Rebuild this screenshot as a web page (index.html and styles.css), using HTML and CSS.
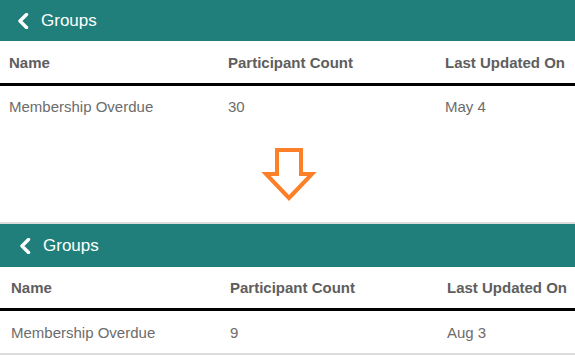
FILE: index.html
```html
<!DOCTYPE html>
<html lang="en">
<head>
    <meta charset="UTF-8">
    <title>Groups</title>
    <link rel="stylesheet" href="styles.css">
</head>
<body>
    <div class="panel panel-before">
        <div class="topbar">
            <svg class="back" width="12" height="16" viewBox="0 0 12 16"><path d="M9.5 1.5 L3 8 L9.5 14.5" fill="none" stroke="#fff" stroke-width="3.4" stroke-linecap="round" stroke-linejoin="round"/></svg>
            <span class="title">Groups</span>
        </div>
        <div class="row head">
            <div>Name</div><div>Participant Count</div><div>Last Updated On</div>
        </div>
        <div class="row data">
            <div>Membership Overdue</div><div>30</div><div>May 4</div>
        </div>
    </div>

    <div class="arrow">
        <svg width="56" height="58" viewBox="0 0 56 58">
            <polygon points="16,4 40,4 40,28 51,28 28,52 5,28 16,28" fill="#fff" stroke="#fd7f27" stroke-width="4"/>
        </svg>
    </div>

    <div class="panel panel-after">
        <div class="topbar">
            <svg class="back" width="12" height="16" viewBox="0 0 12 16"><path d="M9.5 1.5 L3 8 L9.5 14.5" fill="none" stroke="#fff" stroke-width="3.4" stroke-linecap="round" stroke-linejoin="round"/></svg>
            <span class="title">Groups</span>
        </div>
        <div class="row head">
            <div>Name</div><div>Participant Count</div><div>Last Updated On</div>
        </div>
        <div class="row data">
            <div>Membership Overdue</div><div>9</div><div>Aug 3</div>
        </div>
    </div>
</body>
</html>
```

FILE: styles.css
```css
body {
    margin: 0;
    background: #fff;
    font-family: "Liberation Sans", Arial, sans-serif;
    width: 575px;
    overflow: hidden;
}
.topbar {
    background: #207f7b;
    display: flex;
    align-items: center;
    color: #fff;
}
.back {
    display: block;
}
.title {
    font-size: 17px;
}
.row {
    display: grid;
    grid-template-columns: 219px 217px 1fr;
    font-size: 15px;
    align-items: center;
    box-sizing: border-box;
}
.head {
    font-weight: bold;
    color: #5e5e5e;
    border-bottom: 3px solid #000;
}
.data {
    color: #6c6c6c;
}

.panel-before .topbar {
    height: 41px;
    padding-left: 17px;
    gap: 12px;
}
.panel-before .row {
    padding-left: 9px;
}
.panel-before .head {
    height: 45px;
    padding-top: 1px;
}
.panel-before .data {
    height: 44px;
    padding-bottom: 3px;
}

.arrow {
    height: 92px;
    display: flex;
    justify-content: center;
    align-items: flex-start;
}
.arrow svg {
    margin-top: 16px;
    margin-left: 2px;
}

.panel-after {
    border-top: 2px solid #dcdcdc;
}
.panel-after .topbar {
    height: 43px;
    padding-left: 19px;
    gap: 12px;
}
.panel-after .row {
    padding-left: 11px;
}
.panel-after .head {
    height: 44px;
}
.panel-after .data {
    height: 44px;
    border-bottom: 2px solid #dcdcdc;
}
```
